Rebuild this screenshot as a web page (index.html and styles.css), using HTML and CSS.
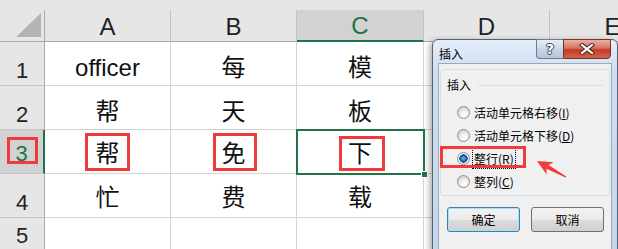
FILE: index.html
```html
<!DOCTYPE html>
<html>
<head>
  <meta charset="UTF-8">
  <title>插入</title>
  <link rel="stylesheet" href="styles.css">
</head>
<body>
<div class="sheet">
  <div class="strip"></div>
  <div class="corner"><i class="tri"></i></div>
  <div class="colhead">A</div>
  <div class="colhead">B</div>
  <div class="colhead sel">C</div>
  <div class="colhead">D</div>
  <div class="colhead">E</div>

  <div class="rowhead">1</div>
  <div class="cell lo">officer</div>
  <div class="cell lo">每</div>
  <div class="cell lo">模</div>
  <div class="cell"></div>
  <div class="cell"></div>

  <div class="rowhead">2</div>
  <div class="cell lo">帮</div>
  <div class="cell lo">天</div>
  <div class="cell lo">板</div>
  <div class="cell"></div>
  <div class="cell"></div>

  <div class="rowhead sel mid">3</div>
  <div class="cell">帮</div>
  <div class="cell">免</div>
  <div class="cell">下</div>
  <div class="cell"></div>
  <div class="cell"></div>

  <div class="rowhead">4</div>
  <div class="cell">忙</div>
  <div class="cell">费</div>
  <div class="cell">载</div>
  <div class="cell"></div>
  <div class="cell"></div>

  <div class="rowhead top">5</div>
  <div class="cell"></div>
  <div class="cell"></div>
  <div class="cell"></div>
  <div class="cell"></div>
  <div class="cell"></div>
</div>

<!-- active cell C3 -->
<div class="cursor"><i class="handle"></i></div>

<div class="dialog">
  <div class="titlebar">
    <span class="title">插入</span>
    <div class="caption">
      <span class="cap-help">?</span>
      <span class="cap-close">
        <svg width="16" height="12" viewBox="0 0 16 12">
          <path d="M3 2 L13 10 M13 2 L3 10" stroke="#4a2a26" stroke-width="4.2" stroke-linecap="square"/>
          <path d="M3 2 L13 10 M13 2 L3 10" stroke="#ffffff" stroke-width="2.2" stroke-linecap="square"/>
        </svg>
      </span>
    </div>
  </div>
  <div class="client">
    <div class="panel">
      <div class="panel-head"><span>插入</span><i class="rule"></i></div>
      <div class="radio"><i class="dot"></i><span>活动单元格右移(<u>I</u>)</span></div>
      <div class="radio"><i class="dot"></i><span>活动单元格下移(<u>D</u>)</span></div>
      <div class="radio"><i class="dot on"></i><span class="focus">整行(<u>R</u>)</span></div>
      <div class="radio"><i class="dot"></i><span>整列(<u>C</u>)</span></div>
    </div>
    <div class="buttons">
      <div class="btn default">确定</div>
      <div class="btn">取消</div>
    </div>
  </div>
</div>

<!-- red annotation marks -->
<div class="mark m-row"></div>
<div class="mark m-a"></div>
<div class="mark m-b"></div>
<div class="mark m-c"></div>
<div class="mark m-opt"></div>
<svg class="arrow" width="618" height="249" viewBox="0 0 618 249">
  <polygon transform="translate(537 161) rotate(29)" points="0,0 15,-7 12,-2.2 33,-0.7 33,0.7 12,2.2 15,7" fill="#ef3b3b"/>
</svg>
</body>
</html>
```

FILE: styles.css
```css
html, body {
  margin: 0;
  padding: 0;
}

body {
  width: 618px;
  height: 249px;
  overflow: hidden;
  position: relative;
  background: #ffffff;
  font-family: "Liberation Sans", "Noto Sans CJK SC", sans-serif;
}

.sheet {
  display: grid;
  grid-template-columns: 45px 126px 126px 127px 126px 126px;
  grid-template-rows: 10px 32px 44px 44px 44px 44px 44px;
  width: 676px;
  color: #111111;
}

.strip {
  grid-column: 1 / -1;
  background: #e6e6e6;
}

.corner {
  display: flex;
  justify-content: flex-end;
  align-items: flex-end;
  padding: 0 3px 4px 0;
  background: #e6e6e6;
  border-right: 1px solid #ababab;
  border-bottom: 1px solid #ababab;
  box-sizing: border-box;
}

.tri {
  width: 25px;
  height: 24px;
  background: #b4b4b4;
  clip-path: polygon(100% 0, 100% 100%, 0 100%);
}

.colhead {
  display: flex;
  justify-content: center;
  align-items: center;
  padding-top: 2px;
  background: #e6e6e6;
  border-right: 1px solid #c3c3c3;
  border-bottom: 1px solid #ababab;
  box-sizing: border-box;
  font-size: 24px;
  color: #222222;
}

.colhead.sel {
  background: #d2d2d2;
  color: #217346;
  border-bottom: 2px solid #217346;
}

.rowhead {
  display: flex;
  justify-content: center;
  align-items: flex-end;
  padding-bottom: 3px;
  background: #e6e6e6;
  border-right: 1px solid #ababab;
  border-bottom: 1px solid #c6c6c6;
  box-sizing: border-box;
  font-size: 22px;
  line-height: 22px;
  color: #222222;
}

.rowhead.mid {
  align-items: center;
  padding: 4px 0 0 0;
}

.rowhead.top {
  align-items: flex-start;
  padding: 7px 0 0 0;
}

.rowhead.sel {
  background: #d2d2d2;
  color: #217346;
  border-right: 2px solid #217346;
}

.cell {
  display: flex;
  justify-content: center;
  align-items: center;
  padding-top: 4px;
  border-right: 1px solid #d4d4d4;
  border-bottom: 1px solid #d4d4d4;
  box-sizing: border-box;
  font-size: 24px;
  line-height: 26px;
}

.cell.lo {
  padding-top: 8px;
}

.cursor {
  position: absolute;
  left: 296px;
  top: 129px;
  width: 129px;
  height: 46px;
  border: 2px solid #217346;
  box-sizing: border-box;
}

.handle {
  position: absolute;
  right: -5px;
  bottom: -5px;
  width: 5px;
  height: 5px;
  background: #217346;
  border: 1px solid #ffffff;
}

/* insert dialog */
.dialog {
  position: absolute;
  left: 432px;
  top: 39px;
  width: 186px;
  height: 214px;
  box-sizing: border-box;
  border: 1px solid #59616b;
  border-radius: 6px 6px 0 0;
  background: linear-gradient(#e4eefa, #cfdff2 30px, #c4d6ee);
  box-shadow: -2px 2px 6px rgba(0, 0, 0, 0.35);
  font-family: "Noto Sans CJK SC", "Liberation Sans", sans-serif;
  font-size: 12px;
  color: #000000;
}

.titlebar {
  position: relative;
  height: 23px;
}

.title {
  display: block;
  padding: 6px 0 0 6px;
  line-height: 16px;
}

.caption {
  position: absolute;
  top: -1px;
  right: 6px;
  display: flex;
}

.cap-help {
  width: 27px;
  height: 20px;
  box-sizing: border-box;
  border: 1px solid #6d7c8e;
  border-right: 0;
  border-radius: 0 0 0 4px;
  background: linear-gradient(#e6eef7, #c9d7e6 50%, #b5c6da);
  text-align: center;
  font-family: "DejaVu Sans", sans-serif;
  font-weight: bold;
  font-size: 14px;
  line-height: 18px;
  color: #ffffff;
  text-shadow: 1px 0 #3b4450, -1px 0 #3b4450, 0 1px #3b4450, 0 -1px #3b4450;
}

.cap-close {
  display: flex;
  justify-content: center;
  align-items: center;
  width: 48px;
  height: 20px;
  box-sizing: border-box;
  border: 1px solid #7a3228;
  border-radius: 0 0 4px 0;
  background: linear-gradient(#eab1a4, #d9715f 45%, #c23a26 55%, #d4644a);
}

.client {
  position: absolute;
  left: 5px;
  right: 5px;
  top: 23px;
  bottom: 0;
  padding: 5px 0 0 0;
  background: #f0f0f0;
  border: 1px solid #9aa9bb;
  border-bottom: 0;
}

.panel {
  height: 127px;
  margin: 0 1px;
  padding: 7px 6px 0 16px;
  box-sizing: border-box;
  border: 1px solid #d5dfe5;
  border-radius: 3px;
}

.panel-head {
  display: flex;
  align-items: center;
  margin-left: -10px;
  margin-bottom: 8px;
  line-height: 16px;
}

.rule {
  flex: 1;
  height: 1px;
  margin-left: 7px;
  background: #d5dfe5;
}

.radio {
  display: flex;
  align-items: center;
  height: 23px;
}

.dot {
  width: 13px;
  height: 13px;
  margin-right: 4px;
  box-sizing: border-box;
  border-radius: 50%;
  border: 1px solid #8e8f8f;
  background: radial-gradient(circle at 60% 70%, #ffffff 0, #f4f4f4 30%, #cfcfcf 80%);
}

.dot.on {
  background: radial-gradient(circle at 50% 50%, #6ab7f0 0, #2a6fb4 2.5px, #1b4f86 4px, #ffffff 4.5px, #e3e3e3 80%);
}

.focus {
  outline: 1px dotted #000000;
  outline-offset: 1px;
}

.buttons {
  display: flex;
  gap: 11px;
  margin-top: 11px;
  padding-left: 8px;
}

.btn {
  width: 73px;
  height: 25px;
  box-sizing: border-box;
  border: 1px solid #707070;
  border-radius: 3px;
  background: linear-gradient(#f2f2f2, #ebebeb 50%, #dddddd 51%, #cfcfcf);
  text-align: center;
  line-height: 23px;
}

.btn.default {
  border-color: #3c7fb1;
  box-shadow: inset 0 0 0 1px #a6e1f7;
}

/* annotations */
.mark {
  position: absolute;
  border: 3px solid #ef3b3b;
  box-sizing: border-box;
}

.m-row { left: 7px; top: 137px; width: 31px; height: 27px; }
.m-a { left: 85px; top: 133px; width: 45px; height: 38px; }
.m-b { left: 213px; top: 133px; width: 44px; height: 38px; }
.m-c { left: 339px; top: 136px; width: 46px; height: 35px; }
.m-opt { left: 440px; top: 146px; width: 86px; height: 22px; }

.arrow {
  position: absolute;
  left: 0;
  top: 0;
}
```
